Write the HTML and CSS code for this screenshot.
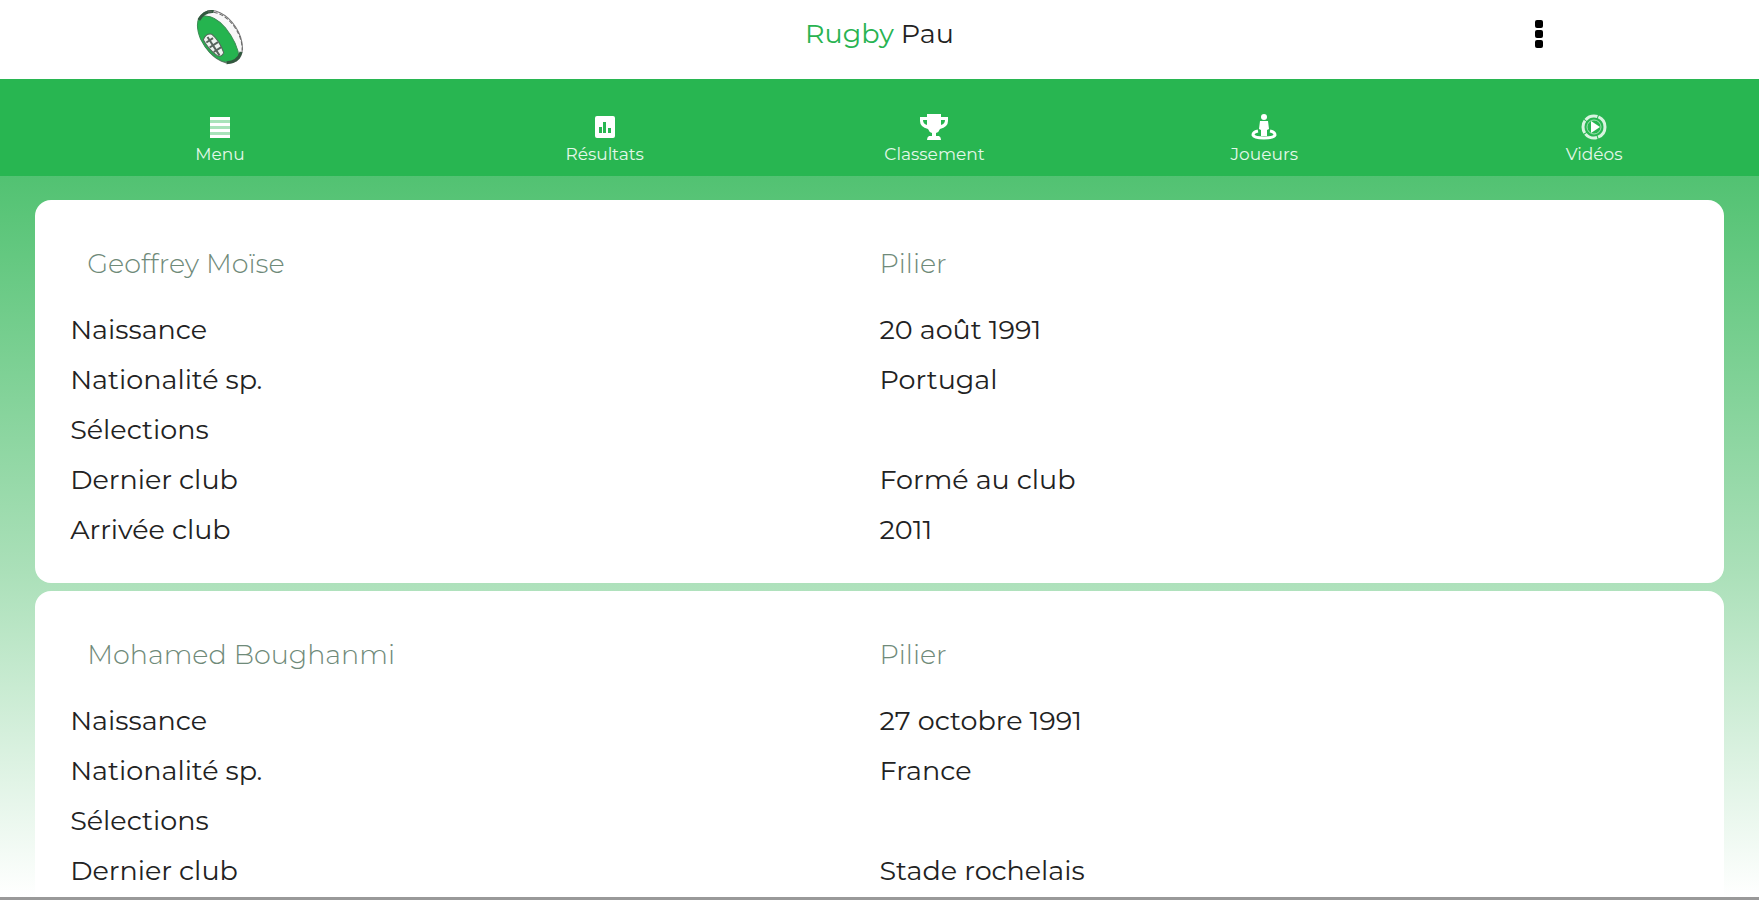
FILE: index.html
```
<!DOCTYPE html>
<html lang="fr">
<head>
  <meta charset="utf-8">
  <meta name="viewport" content="width=device-width, initial-scale=1">
  <title>Rugby Pau</title>
  <link rel="stylesheet" href="styles.css">
</head>
<body class="app">
  <header class="header">
    <svg class="logo" viewBox="0 0 48 60" aria-hidden="true">
      <g transform="rotate(-33 24 30)">
        <ellipse cx="24" cy="31" rx="18" ry="29" fill="#f8f8f8" stroke="#777" stroke-width="1"/>
        <path d="M17 3 Q30 6 33 26 Q35 46 28 59 Q19 60 12 52 Q4 40 6 22 Q9 7 17 3Z" fill="#25b44f" stroke="#3c8b54" stroke-width="1"/>
        <path d="M8 24 Q14 20 18 24 Q21 34 18 46 Q14 49 11 45 Q7 35 8 24Z" fill="#eef3ef" stroke="#52675a" stroke-width="1"/>
        <path d="M13 24v22M9 28h8M9 34h10M10 40h9" fill="none" stroke="#58645c" stroke-width="2"/>
        <path d="M15 5 Q24 0 32 6M15 56 Q24 62 33 55" fill="none" stroke="#31583e" stroke-width="3"/>
        <path d="M27 3 Q39 10 41 28 Q42 43 35 54" fill="none" stroke="#666" stroke-width="1" stroke-dasharray="4 2"/>
      </g>
    </svg>
    <h1 class="title"><span class="accent">Rugby</span> Pau</h1>
    <button class="more" type="button" aria-label="Options">
      <svg class="dots" viewBox="0 0 10 30" aria-hidden="true">
        <rect x="1" y="1" width="8" height="8" rx="2"/>
        <rect x="1" y="11" width="8" height="8" rx="2"/>
        <rect x="1" y="21" width="8" height="8" rx="2"/>
      </svg>
    </button>
  </header>

  <nav class="nav">
    <a class="nav-item" href="#menu">
      <svg class="icon" viewBox="0 0 28 28" aria-hidden="true"><path fill="#a9e3ba" d="M4 5h20v20H4z"/><path d="M4 4h20v3H4zM4 10h20v3H4zM4 16h20v3H4zM4 22h20v3H4z"/></svg>
      Menu
    </a>
    <a class="nav-item" href="#resultats">
      <svg class="icon" viewBox="0 0 28 28" aria-hidden="true"><path fill-rule="evenodd" d="M6 3h16q2 0 2 2v18q0 2-2 2H6q-2 0-2-2V5q0-2 2-2zM8 14v6h3v-6zM12 9v11h3V9zM17 15v5h3v-5z"/></svg>
      Résultats
    </a>
    <a class="nav-item" href="#classement">
      <svg class="icon" viewBox="0 0 28 28" aria-hidden="true"><path fill-rule="evenodd" d="M7 1h14v3h7v4q0 6-8 8-1 3-4 4v3h3q2 1 2 4H7q0-3 2-4h3v-3q-3-1-4-4-8-2-8-8V4h7zM3 7q0 4 4 5V7zM21 7v5q4-1 4-5z"/></svg>
      Classement
    </a>
    <a class="nav-item" href="#joueurs">
      <svg class="icon" viewBox="0 0 28 28" aria-hidden="true"><circle cx="14" cy="4" r="3"/><path d="M10 8h8l1 8-2 1v6h-6v-6l-2-1z"/><path d="M8 18q-5 1-5 4 1 3 11 3t11-3q0-3-5-4" fill="none" stroke="#fff" stroke-width="3"/></svg>
      Joueurs
    </a>
    <a class="nav-item" href="#videos">
      <svg class="icon" viewBox="0 0 28 28" aria-hidden="true"><circle cx="14" cy="14" r="11" fill="none" stroke="#d9f4e0" stroke-width="3" stroke-dasharray="13 1"/><circle cx="14" cy="14" r="7" fill="none" stroke="#9de0b0" stroke-width="1"/><path d="M11 8l9 6-9 6z"/></svg>
      Vidéos
    </a>
  </nav>

  <main class="players">
    <article class="card">
      <table class="player">
        <thead><tr><th class="name" scope="col">Geoffrey Moïse</th><th scope="col">Pilier</th></tr></thead>
        <tbody>
          <tr><th scope="row">Naissance</th><td>20 août 1991</td></tr>
          <tr><th scope="row">Nationalité sp.</th><td>Portugal</td></tr>
          <tr><th scope="row">Sélections</th><td></td></tr>
          <tr><th scope="row">Dernier club</th><td>Formé au club</td></tr>
          <tr><th scope="row">Arrivée club</th><td>2011</td></tr>
        </tbody>
      </table>
    </article>
    <article class="card card-last">
      <table class="player">
        <thead><tr><th class="name" scope="col">Mohamed Boughanmi</th><th scope="col">Pilier</th></tr></thead>
        <tbody>
          <tr><th scope="row">Naissance</th><td>27 octobre 1991</td></tr>
          <tr><th scope="row">Nationalité sp.</th><td>France</td></tr>
          <tr><th scope="row">Sélections</th><td></td></tr>
          <tr><th scope="row">Dernier club</th><td>Stade rochelais</td></tr>
        </tbody>
      </table>
    </article>
  </main>
</body>
</html>
```
FILE: styles.css
```
* {
  box-sizing: border-box;
}

.app {
  display: flex;
  flex-direction: column;
  min-height: 100vh;
  margin: 0;
  border-bottom: 3px solid #999;
  background: #fff;
  color: #222;
  font-family: Montserrat, Inter, "Open Sans", sans-serif;
  font-size: 27px;
}

.header {
  display: grid;
  grid-template-columns: 1fr 2fr 1fr;
  align-items: start;
  justify-items: center;
  padding: 6px 0 13px;
}

.logo {
  width: 48px;
  height: 60px;
}

.title {
  margin: 0;
  font-size: 27px;
  font-weight: 400;
  line-height: 56px;
}

.accent {
  color: #28b351;
}

.more {
  padding: 13px 0;
  border: 0;
  background: none;
}

.dots {
  display: block;
  width: 10px;
  height: 30px;
}

.nav {
  display: grid;
  grid-template-columns: 4fr 3fr 3fr 3fr 3fr;
  padding: 34px 0 11px;
  background: #28b651;
}

.nav-item {
  display: flex;
  flex-direction: column;
  align-items: center;
  gap: 2px;
  color: #e4f8e9;
  font-size: 17px;
  line-height: 22px;
  text-decoration: none;
}

.icon {
  width: 28px;
  height: 28px;
  fill: #fff;
}

.players {
  display: flex;
  flex: 1;
  flex-direction: column;
  gap: 8px;
  padding: 24px 2% 0;
  background: linear-gradient(#52c272, #abe0b9 55%, #fff);
}

.card {
  padding: 39px 0 28px;
  border-radius: 16px;
  background: #fff;
}

.card-last {
  flex: 1;
  padding-bottom: 0;
  border-radius: 16px 16px 0 0;
}

.player {
  width: 100%;
  table-layout: fixed;
  border-collapse: collapse;
  line-height: 50px;
}

.player th,
.player td {
  height: 50px;
  padding: 0;
  font-weight: 400;
  text-align: left;
}

.player thead th {
  padding-bottom: 16px;
  color: #6f8a79;
  font-weight: 300;
}

.player th:first-child {
  padding-left: 35px;
}

.player .name:first-child {
  padding-left: 52px;
}
```
